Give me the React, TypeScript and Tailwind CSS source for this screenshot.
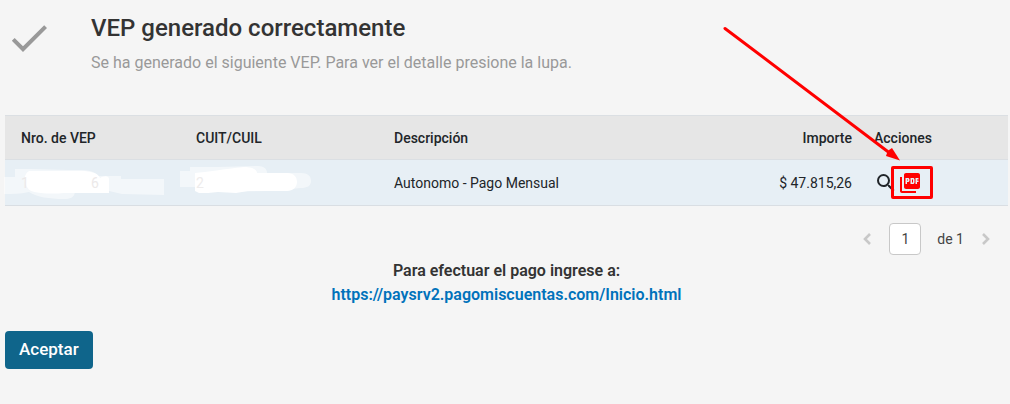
import type { ReactNode } from "react";
import clsx from "clsx";
import { MdCheck, MdPictureAsPdf, MdSearch } from "react-icons/md";

type Vep = {
  numero: ReactNode;
  cuit: ReactNode;
  descripcion: string;
  importe: string;
};

const PAYMENT_URL = "https://paysrv2.pagomiscuentas.com/Inicio.html";

function HiddenNumber() {
  return (
    <div className="relative h-5 text-[#ece9e9]">
      <svg
        className="absolute -left-[17px] -top-2 h-9 w-[164px]"
        viewBox="0 0 164 36"
        fill="#fff"
        aria-hidden="true"
      >
        <path
          opacity=".5"
          d="M0 12h11V4h15l40 1c13 0 23-1 28 6h23v3h43v16l-42-1-13-3-34 1c-1 6-5 7-11 7-15 0-27-2-35-7-9 2-17 2-25 2z"
        />
        <path d="M25 6h52c10 0 17 2 19 7 3-2 9-3 9 1v14H60c-10 1-24 1-33-2-7-4-9-16-2-20z" />
      </svg>
      <span className="relative">1</span>
      <span className="relative ml-[62px]">6</span>
    </div>
  );
}

function HiddenCuit() {
  return (
    <div className="relative h-5 text-[#eeecec]">
      <svg
        className="absolute -left-4 -top-2 h-9 w-[134px]"
        viewBox="0 0 134 36"
        fill="#fff"
        aria-hidden="true"
      >
        <path
          opacity=".5"
          d="M0 6h10V2h26l42-1c6 0 9 3 9 7h34c7 0 10 3 10 8s-4 7-10 7l-32 3-63 1-10-5H0z"
        />
        <path d="M15 8c12-1 29-4 49-6 7 0 13 2 13 6h30c7 0 10 4 10 9s-4 9-10 9H68l-12 2-18-1c-7 1-13 1-19 1l-4-2z" />
      </svg>
      <span className="relative">2</span>
    </div>
  );
}

function PdfPointer() {
  return (
    <span className="pointer-events-none" aria-hidden="true">
      <span className="absolute -left-[7px] -top-[5px] h-[33px] w-[42px] rounded-xs border-3 border-[#f00]" />
      <svg
        className="absolute -left-[176px] -top-[146px] h-[137px] w-[180px] max-w-none"
        viewBox="0 0 180 137"
      >
        <path
          d="M3 3.5 169 129"
          stroke="#f00"
          strokeWidth="3"
          strokeLinecap="round"
        />
        <path d="M164 131 165 128 167 125 170 123 178 135.500z" fill="#f00" />
      </svg>
    </span>
  );
}

const veps: Vep[] = [
  {
    numero: <HiddenNumber />,
    cuit: <HiddenCuit />,
    descripcion: "Autonomo - Pago Mensual",
    importe: "$ 47.815,26",
  },
];

function VepTable() {
  return (
    <table className="w-full table-fixed border-collapse text-left text-sm text-[#212529]">
      <thead className="bg-[#e6e6e6]">
        <tr className="h-11 border-y border-[#dbdfe3]">
          <th className="w-[180px] pl-4 font-medium">Nro. de VEP</th>
          <th className="w-[198px] px-[11px] font-medium">CUIT/CUIL</th>
          <th className="px-[11px] font-medium">Descripción</th>
          <th className="w-[180px] px-[11px] text-right font-medium">Importe</th>
          <th className="w-[145px] px-[11px] font-medium">Acciones</th>
        </tr>
      </thead>
      <tbody>
        {veps.map((vep) => (
          <tr
            key={vep.descripcion}
            className="h-[46px] border-b border-[#d9dee3] bg-[#e7eff5]"
          >
            <td className="pl-4">{vep.numero}</td>
            <td className="px-[11px]">{vep.cuit}</td>
            <td className="px-[11px]">{vep.descripcion}</td>
            <td className="px-[11px] text-right">{vep.importe}</td>
            <td className="px-[11px]">
              <div className="flex items-center">
                <button type="button" aria-label="Ver detalle">
                  <MdSearch className="size-6" />
                </button>
                <button
                  type="button"
                  aria-label="Descargar PDF"
                  className="relative text-[#f00]"
                >
                  <MdPictureAsPdf className="size-6" />
                  <PdfPointer />
                </button>
              </div>
            </td>
          </tr>
        ))}
      </tbody>
    </table>
  );
}

function Chevron({ flipped }: { flipped?: boolean }) {
  return (
    <svg
      className={clsx("size-6", flipped && "rotate-180")}
      viewBox="0 0 24 24"
      fill="none"
      stroke="currentColor"
      strokeWidth="2.600"
      aria-hidden="true"
    >
      <path d="M15 7 10 12l5 5" />
    </svg>
  );
}

function Pagination() {
  return (
    <nav className="flex items-center justify-end pr-[10px] text-sm text-[#444]">
      <button
        type="button"
        aria-label="Página anterior"
        className="text-[#c8c8c8]"
      >
        <Chevron />
      </button>
      <input
        type="text"
        aria-label="Página"
        defaultValue="1"
        className="ml-[10px] size-8 rounded border border-[#c8c8c8] bg-white text-center"
      />
      <span className="ml-4">de 1</span>
      <button
        type="button"
        aria-label="Página siguiente"
        className="ml-[10px] text-[#c8c8c8]"
      >
        <Chevron flipped />
      </button>
    </nav>
  );
}

export default function App() {
  return (
    <main className="min-h-screen overflow-hidden bg-[#f5f5f5] pl-[5px] pr-[2px] pt-3 font-[Roboto,sans-serif] text-[#333]">
      <header className="flex items-start">
        <MdCheck className="mt-[2px] size-12 shrink-0 text-[#999]" />
        <div className="ml-[38px]">
          <h1 className="text-2xl font-medium">VEP generado correctamente</h1>
          <p className="mt-[7px] text-base text-[#999]">
            Se ha generado el siguiente VEP. Para ver el detalle presione la
            lupa.
          </p>
        </div>
      </header>

      <section className="mt-10">
        <VepTable />
        <div className="mt-[17px]">
          <Pagination />
        </div>
      </section>

      <p className="mt-1 text-center text-base font-semibold">
        Para efectuar el pago ingrese a:
        <br />
        <a href={PAYMENT_URL} className="text-[#0072bb]">
          {PAYMENT_URL}
        </a>
      </p>

      <button
        type="button"
        className="mt-6 h-[38px] rounded bg-[#0f658b] px-[14px] text-[17px] font-medium text-white"
      >
        Aceptar
      </button>
    </main>
  );
}
